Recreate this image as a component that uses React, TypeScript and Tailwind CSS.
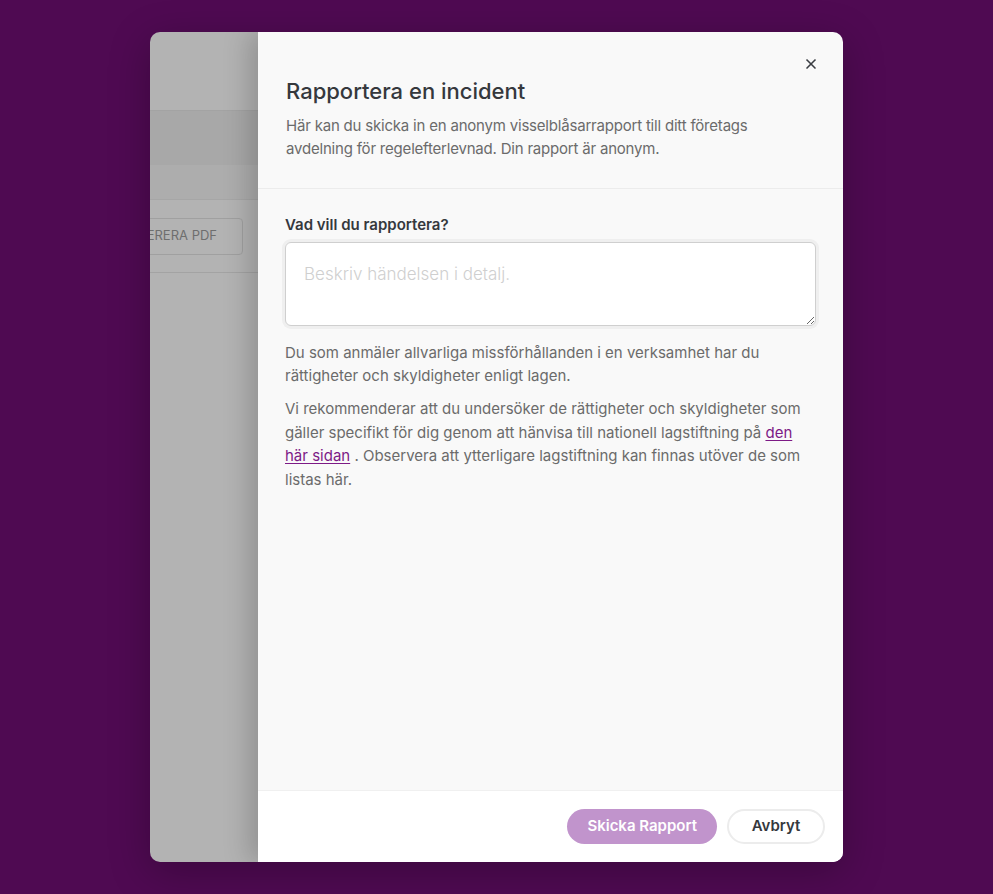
import { X } from 'lucide-react'

const font = { fontFamily: 'Inter, "Noto Sans", sans-serif' }

function BackgroundPage() {
  // greyed-out page behind the drawer
  return (
    <div className="w-[108px] shrink-0 flex flex-col bg-[#b3b3b3] overflow-hidden">
      <div className="h-[79px] border-b border-[#a3a3a3]" />
      <div className="h-[54px] bg-[#a8a8a8]" />
      <div className="h-[35px] bg-[#adadad] border-b border-[#a6a6a6]" />
      <div className="h-[73px] flex items-center border-b border-[#a3a3a3]">
        <div className="-ml-[40px] h-[37px] w-[133px] rounded border border-[#a0a0a0] flex items-center justify-end pr-[25px] text-[13px] text-[#6e6e6e]">
          GENERERA PDF
        </div>
      </div>
      <div className="flex-1" />
    </div>
  )
}

export default function App() {
  return (
    <div className="min-h-screen bg-[#4f0a52] flex items-center justify-center" style={font}>
      <div className="w-[693px] h-[830px] flex rounded-[10px] overflow-hidden shadow-[0_10px_40px_rgba(0,0,0,0.25)]">
        <BackgroundPage />

        {/* Drawer */}
        <div className="relative flex-1 flex flex-col bg-[#f9f9f9] shadow-[-10px_0_24px_rgba(0,0,0,0.18)]">
          <button className="absolute right-[24px] top-[24px] text-[#3a3d42]">
            <X size={16} strokeWidth={2.5} />
          </button>

          <div className="px-[28px] pt-[45px] pb-[28px] border-b border-[#ececec]">
            <h2 className="text-[22px] leading-[28px] font-medium text-[#35383d]">Rapportera en incident</h2>
            <p className="mt-[9px] text-[15px] leading-[23px] text-[#6b6b6b] tracking-[-0.2px]">
              Här kan du skicka in en anonym visselblåsarrapport till ditt företags avdelning för regelefterlevnad. Din rapport är anonym.
            </p>
          </div>

          <div className="flex-1 px-[27px] pt-[26px]">
            <label className="block text-[15px] leading-[20px] font-semibold text-[#35383d]">Vad vill du rapportera?</label>
            <textarea
              className="mt-[7px] block w-full h-[84px] rounded-[6px] border border-[#cfcfcf] bg-white px-[18px] py-[19px] text-[17px] font-light placeholder:text-[#cfcfcf] outline-none shadow-[0_0_0_3px_#efefef]"
              placeholder="Beskriv händelsen i detalj."
            />
            <p className="mt-[15px] text-[15px] leading-[23px] text-[#6b6b6b]">
              Du som anmäler allvarliga missförhållanden i en verksamhet har du rättigheter och skyldigheter enligt lagen.
            </p>
            <p className="mt-[10px] text-[15px] leading-[23.5px] text-[#6b6b6b]">
              Vi rekommenderar att du undersöker de rättigheter och skyldigheter som gäller specifikt för dig genom att hänvisa till nationell lagstiftning på{' '}
              <a href="#" className="text-[#7d1a86] underline underline-offset-2">den här sidan</a> . Observera att ytterligare lagstiftning kan finnas utöver de som listas här.
            </p>
          </div>

          <div className="h-[72px] bg-white border-t border-[#f0f0f0] flex items-center justify-end gap-[10px] px-[18px]">
            <button className="h-[35px] px-[20px] rounded-full bg-[#c194cc] text-white text-[15px] font-semibold">
              Skicka Rapport
            </button>
            <button className="h-[35px] w-[98px] rounded-full bg-white border-2 border-[#ececec] text-[#35383d] text-[15px] font-semibold">
              Avbryt
            </button>
          </div>
        </div>
      </div>
    </div>
  )
}
